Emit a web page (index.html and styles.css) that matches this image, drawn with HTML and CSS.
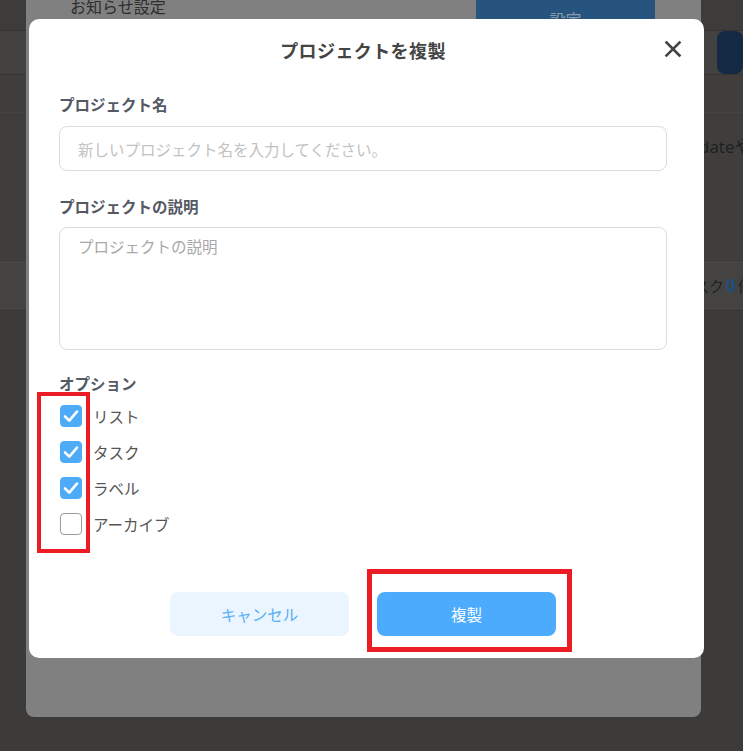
FILE: index.html
```html
<!DOCTYPE html>
<html lang="ja">
<head>
<meta charset="utf-8">
<title>プロジェクトを複製</title>
<link rel="stylesheet" href="styles.css">
</head>
<body>
<div class="page">
  <div class="pg-top"></div>
  <div class="pg-bar"><div class="pg-btn"></div></div>
  <div class="pg-row"></div>
  <div class="pg-tall"><span class="pg-text">dateや</span></div>
  <div class="pg-count"><span class="pg-text small">スク<b class="num">0</b>件</span></div>
</div>

<div class="sub-panel">
  <div class="sub-head">
    <span class="sub-title">お知らせ設定</span>
    <span class="sub-btn">設定</span>
  </div>
</div>

<div class="dialog">
  <div class="dlg-head">
    <h1 class="dlg-title">プロジェクトを複製</h1>
    <span class="dlg-close"><svg width="18" height="18" viewBox="0 0 18 18"><path d="M2.5 2.5 L15.5 15.5 M15.5 2.5 L2.5 15.5" stroke="#444" stroke-width="2.6" stroke-linecap="square" fill="none"/></svg></span>
  </div>
  <div class="dlg-body">
    <div class="label first">プロジェクト名</div>
    <input class="field" type="text" placeholder="新しいプロジェクト名を入力してください。">
    <div class="label second">プロジェクトの説明</div>
    <textarea class="area" placeholder="プロジェクトの説明"></textarea>
    <div class="label third">オプション</div>
    <div class="options">
      <div class="opt"><span class="box on"><svg width="22" height="22" viewBox="0 0 22 22"><path d="M5 11.5 L9.3 15.6 L17 6.6" stroke="#fff" stroke-width="2.6" fill="none" stroke-linecap="round" stroke-linejoin="round"/></svg></span><span class="opt-text">リスト</span></div>
      <div class="opt"><span class="box on"><svg width="22" height="22" viewBox="0 0 22 22"><path d="M5 11.5 L9.3 15.6 L17 6.6" stroke="#fff" stroke-width="2.6" fill="none" stroke-linecap="round" stroke-linejoin="round"/></svg></span><span class="opt-text">タスク</span></div>
      <div class="opt"><span class="box on"><svg width="22" height="22" viewBox="0 0 22 22"><path d="M5 11.5 L9.3 15.6 L17 6.6" stroke="#fff" stroke-width="2.6" fill="none" stroke-linecap="round" stroke-linejoin="round"/></svg></span><span class="opt-text">ラベル</span></div>
      <div class="opt"><span class="box"></span><span class="opt-text">アーカイブ</span></div>
    </div>
    <div class="actions">
      <button class="btn cancel">キャンセル</button>
      <button class="btn primary">複製</button>
    </div>
  </div>
</div>

<div class="mark mark-opts"></div>
<div class="mark mark-btn"></div>
</body>
</html>
```

FILE: styles.css
```css
* { box-sizing: border-box; }
html, body { margin: 0; padding: 0; }
body {
  width: 743px;
  height: 751px;
  overflow: hidden;
  position: relative;
  background: #3c3b39;
  font-family: "Noto Sans CJK JP", "Noto Sans", sans-serif;
}

/* underlying page (dimmed) */
.page { width: 100%; }
.pg-top { height: 31px; background: #3d3c3a; border-bottom: 1px solid #353432; }
.pg-bar { height: 44px; background: #434240; border-bottom: 1px solid #353432; padding: 0 0 0 717px; display: flex; align-items: flex-end; }
.pg-btn { width: 60px; height: 43px; background: #142a44; border-radius: 8px; }
.pg-row { height: 38px; background: #3f3e3c; border-bottom: 1px solid #444341; }
.pg-tall { height: 149px; background: #3f3e3c; padding: 20px 0 0 699px; white-space: nowrap; overflow: hidden; }
.pg-count { height: 47px; background: #444341; border-top: 1px solid #4b4a48; border-bottom: 1px solid #4b4a48; padding: 10px 0 0 694px; white-space: nowrap; overflow: hidden; }
.pg-text { font-family: "Open Sans", "Noto Sans CJK JP", sans-serif; font-size: 17px; color: #1f1f1f; }
.pg-text.small { font-size: 15px; }
.num { color: #1d4f80; font-weight: 700; font-size: 17px; margin: 0 2px; }

/* dimmed underlying modal */
.sub-panel {
  position: absolute;
  left: 26px;
  top: -20px;
  width: 675px;
  height: 737px;
  background: #808080;
  border-radius: 8px;
}
.sub-head { display: flex; align-items: flex-start; justify-content: space-between; padding: 0 46px 0 44px; }
.sub-title { margin-top: 15px; font-size: 16px; line-height: 22px; color: #2e2e2e; }
.sub-btn {
  margin-top: 6px;
  width: 179px;
  height: 52px;
  background: #26547e;
  border-radius: 6px;
  color: #8a9aaa;
  font-size: 16px;
  text-align: center;
  line-height: 22px;
  padding-top: 22px;
}

/* dialog */
.dialog {
  position: absolute;
  left: 29px;
  top: 19px;
  width: 675px;
  height: 639px;
  background: #fff;
  border-radius: 10px;
}
.dlg-head { position: relative; height: 62px; }
.dlg-title {
  margin: 0;
  font-size: 18px;
  font-weight: 700;
  color: #444;
  text-align: center;
  line-height: 62px;
  letter-spacing: 0.4px;
  padding-right: 7px;
}
.dlg-close { position: absolute; right: 22px; top: 21px; width: 18px; height: 18px; display: block; }
.dlg-close svg { display: block; }

.dlg-body { padding: 0 37px 0 30px; }
.label { font-size: 15.5px; font-weight: 700; color: #545964; line-height: 22px; }
.label.first { margin-top: 12px; }
.label.second { margin-top: 24px; }
.label.third { margin-top: 22px; }

.field {
  display: block;
  width: 608px;
  height: 45px;
  margin-top: 11px;
  border: 1px solid #dcdcdc;
  border-radius: 8px;
  padding: 0 18px;
  font-family: inherit;
  font-size: 15.5px;
  color: #444;
  outline: none;
}
.field::placeholder { color: #c2c2c2; }
.area {
  display: block;
  width: 608px;
  height: 123px;
  margin-top: 10px;
  border: 1px solid #dcdcdc;
  border-radius: 8px;
  padding: 7px 18px;
  font-family: inherit;
  font-size: 15.5px;
  line-height: 22px;
  resize: none;
  outline: none;
}
.area::placeholder { color: #a8a8a8; }

.options { margin-top: 4px; }
.opt { display: flex; align-items: center; height: 36px; padding-left: 1px; }
.box {
  width: 22px;
  height: 22px;
  border-radius: 4px;
  border: 1px solid #9a9a9a;
  background: #fff;
  flex: none;
}
.box.on { background: #4dabf7; border-color: #4dabf7; }
.box.on svg { display: block; margin: -1px; }
.opt-text { margin-left: 11px; font-size: 15.5px; color: #555; line-height: 22px; }

.actions { display: flex; justify-content: center; gap: 28px; margin-top: 50px; }
.btn {
  width: 179px;
  height: 44px;
  border: none;
  border-radius: 8px;
  font-family: inherit;
  font-size: 15.5px;
  padding: 0;
}
.btn.cancel { background: #ebf5ff; color: #5aaef5; }
.btn.primary { background: #4dabfd; color: #fff; }

/* annotation marks */
.mark { position: absolute; border-style: solid; border-color: #ec1c24; }
.mark-opts { left: 37px; top: 392px; width: 53px; height: 161px; border-width: 4px; }
.mark-btn { left: 367px; top: 569px; width: 205px; height: 83px; border-width: 5px; }
```
